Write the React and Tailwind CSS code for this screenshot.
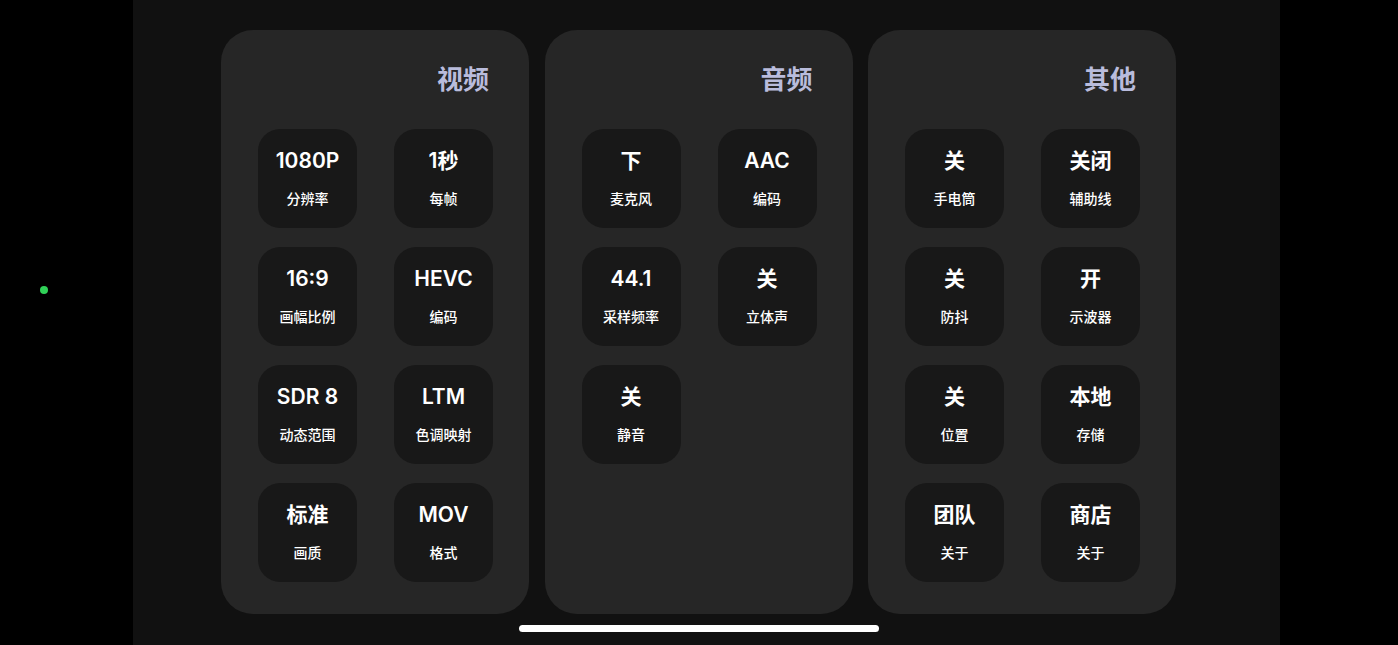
import React from 'react';

const panels = [
  {
    title: '视频',
    items: [
      ['1080P', '分辨率'],
      ['1秒', '每帧'],
      ['16:9', '画幅比例'],
      ['HEVC', '编码'],
      ['SDR 8', '动态范围'],
      ['LTM', '色调映射'],
      ['标准', '画质'],
      ['MOV', '格式'],
    ],
  },
  {
    title: '音频',
    items: [
      ['下', '麦克风'],
      ['AAC', '编码'],
      ['44.1', '采样频率'],
      ['关', '立体声'],
      ['关', '静音'],
    ],
  },
  {
    title: '其他',
    items: [
      ['关', '手电筒'],
      ['关闭', '辅助线'],
      ['关', '防抖'],
      ['开', '示波器'],
      ['关', '位置'],
      ['本地', '存储'],
      ['团队', '关于'],
      ['商店', '关于'],
    ],
  },
];

function Tile({value, label}) {
  return (
    <div className="w-[99px] h-[99px] rounded-[22px] bg-[#181818] flex flex-col items-center pt-[20px] text-white">
      <div className="text-[21px] leading-[24px] font-semibold">{value}</div>
      <div className="text-[14px] leading-[18px] mt-[17px] font-medium">{label}</div>
    </div>
  );
}

function Panel({title, items}) {
  return (
    <div className="w-[308px] h-[584px] rounded-[32px] bg-[#262626] pl-[37px]">
      <div className="mt-[34px] pr-[40px] text-right text-[26px] leading-[32px] font-semibold text-[#b9bcdc]">
        {title}
      </div>
      <div className="mt-[33px] grid grid-cols-[99px_99px] gap-x-[37px] gap-y-[19px]">
        {items.map(([v, l], i) => (
          <Tile key={i} value={v} label={l}/>
        ))}
      </div>
    </div>
  );
}

export default function App() {
  return (
    <div
      className="relative w-[1398px] h-[645px] bg-black overflow-hidden"
      style={{fontFamily: 'Inter, "Noto Sans CJK SC", sans-serif'}}
    >
      <div className="absolute left-[40px] top-[286px] w-[8px] h-[8px] rounded-full bg-[#30d158]"></div>
      <div className="ml-[133px] w-[1147px] h-full bg-[#111111] flex flex-col">
        <div className="ml-[88px] mt-[30px] flex gap-[15.5px]">
          {panels.map(p => (
            <Panel key={p.title} title={p.title} items={p.items}/>
          ))}
        </div>
        <div className="ml-[386px] mt-[11px] w-[360px] h-[7px] rounded-full bg-white"></div>
      </div>
    </div>
  );
}
